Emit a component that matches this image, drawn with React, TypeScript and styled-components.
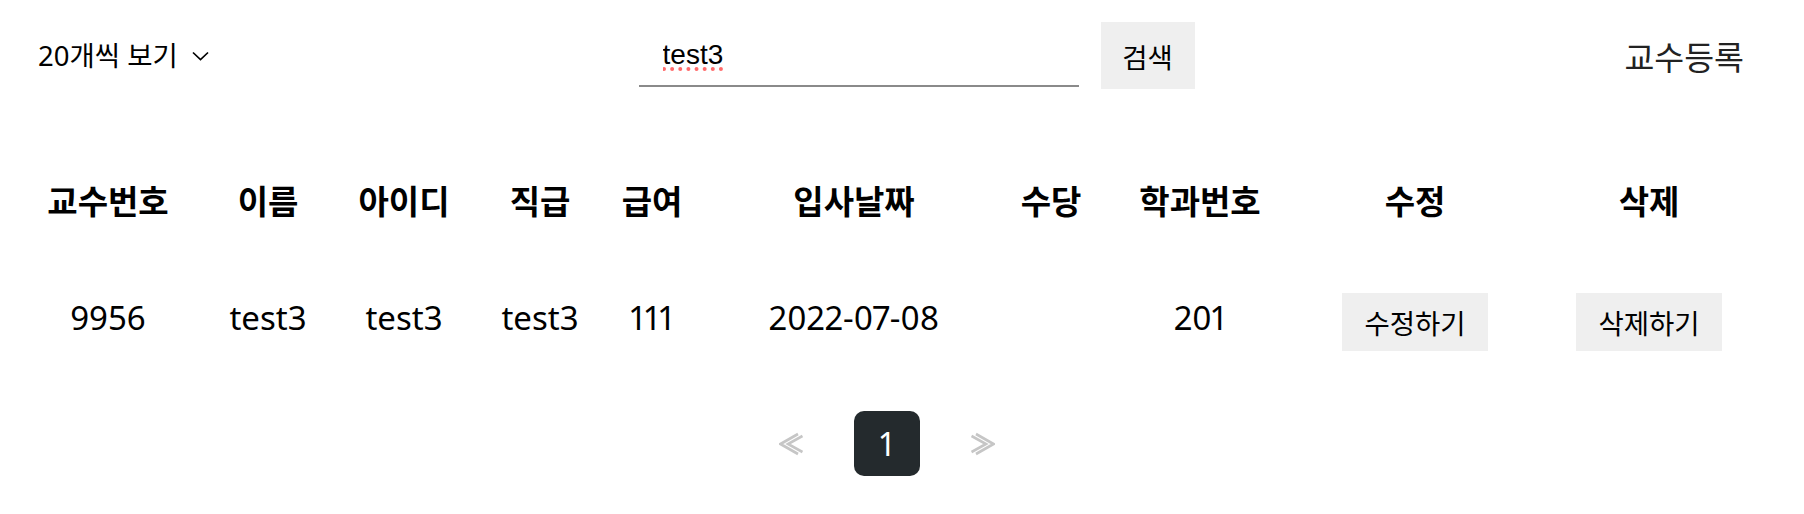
import React from 'react'
import styled, { createGlobalStyle } from 'styled-components'

const GlobalStyle = createGlobalStyle`
  html, body {
    margin: 0;
    padding: 0;
    background: #ffffff;
  }
  body {
    font-family: "Noto Sans", "Noto Sans CJK KR", sans-serif;
    color: #000;
  }
`

const Page = styled.div`
  width: 1804px;
`

const TopBar = styled.div`
  display: flex;
  justify-content: space-between;
  align-items: center;
  height: 67px;
  padding: 22px 60px 0 38px;
`

const PerPage = styled.div`
  display: flex;
  align-items: center;
  gap: 14px;
  font-size: 27.5px;
  line-height: 36px;
  cursor: pointer;
`

const SearchForm = styled.form`
  display: flex;
  align-items: center;
  gap: 22px;
  margin: 0;
`

const SearchInput = styled.input`
  width: 440px;
  height: 62px;
  box-sizing: border-box;
  padding: 0 0 0 24px;
  border: none;
  border-bottom: 2px solid #8a8a8a;
  outline: none;
  font-family: "Liberation Sans", Arial, sans-serif;
  font-size: 28px;
  color: #000;
  background: transparent;
  text-decoration: underline dotted #ff6b6b;
  text-decoration-thickness: 4px;
  text-underline-offset: 4px;
`

const GrayButton = styled.button<{ w: number; h: number }>`
  width: ${({ w }) => w}px;
  height: ${({ h }) => h}px;
  border: none;
  background: #efefef;
  padding: 0;
  font-family: "Noto Sans CJK KR", sans-serif;
  font-size: 27.5px;
  color: #000;
  cursor: pointer;
`

const RegisterLink = styled.a`
  font-family: "Noto Sans CJK KR", sans-serif;
  font-size: 32.5px;
  line-height: 42px;
  color: #222;
  text-decoration: none;
  cursor: pointer;
`

const Table = styled.table`
  table-layout: fixed;
  width: 1762px;
  margin: 61px 0 0 20px;
  border-collapse: collapse;
  text-align: center;
`

const HeadRow = styled.tr`
  height: 100px;
`

const BodyRow = styled.tr`
  height: 144px;
`

const Th = styled.th`
  padding: 0;
  font-family: "Noto Sans CJK KR", sans-serif;
  font-size: 33px;
  font-weight: 700;
  white-space: nowrap;
`

const Td = styled.td<{ $text?: boolean }>`
  padding: 0 0 ${({ $text }) => ($text ? '10px' : '0')};
  font-size: 33px;
  font-variant-numeric: proportional-nums;
  white-space: nowrap;
  vertical-align: middle;
`

const Pager = styled.ul`
  display: flex;
  justify-content: center;
  gap: 30px;
  list-style: none;
  margin: 17px 0 0;
  padding: 0 30px 0 0;
`

const PageItem = styled.li<{ active?: boolean }>`
  width: 66px;
  height: 65px;
  border-radius: 10px;
  display: flex;
  align-items: center;
  justify-content: center;
  background: ${({ active }) => (active ? '#242a2d' : 'transparent')};
  color: #fff;
  font-size: 32px;
  cursor: pointer;
`

const columns = [
  { title: '교수번호', width: 176 },
  { title: '이름', width: 144 },
  { title: '아이디', width: 128 },
  { title: '직급', width: 144 },
  { title: '급여', width: 80 },
  { title: '입사날짜', width: 324 },
  { title: '수당', width: 70 },
  { title: '학과번호', width: 228 },
  { title: '수정', width: 202 },
  { title: '삭제', width: 266 },
]

const professors = [
  { profno: 9956, name: 'test3', userid: 'test3', position: 'test3', pay: 111, hiredate: '2022-07-08', bonus: '', deptno: 201 },
]

function ChevronDown() {
  return (
    <svg width="17" height="10" viewBox="0 0 17 10" fill="none">
      <polyline points="1,1.5 8.5,8.5 16,1.5" stroke="#000" strokeWidth="1.7" />
    </svg>
  )
}

function DoubleArrow({ dir }: { dir: 'left' | 'right' }) {
  const flip = dir === 'right' ? 'scale(-1,1) translate(-24,0)' : undefined
  return (
    <svg width="24" height="24" viewBox="0 0 24 24" fill="none">
      <g transform={flip} stroke="#c6c6c6" strokeWidth="2.6">
        <polyline points="19,2 1.5,12 19,22" />
        <polyline points="23.5,4 9,12 23.5,20" />
      </g>
    </svg>
  )
}

export default function App() {
  return (
    <Page>
      <GlobalStyle />
      <TopBar>
        <PerPage>
          20개씩 보기
          <ChevronDown />
        </PerPage>
        <SearchForm onSubmit={(e) => e.preventDefault()}>
          <SearchInput defaultValue="test3" />
          <GrayButton w={94} h={67} type="submit">
            검색
          </GrayButton>
        </SearchForm>
        <RegisterLink>교수등록</RegisterLink>
      </TopBar>

      <Table>
        <colgroup>
          {columns.map((c) => (
            <col key={c.title} style={{ width: c.width }} />
          ))}
        </colgroup>
        <thead>
          <HeadRow>
            {columns.map((c) => (
              <Th key={c.title}>{c.title}</Th>
            ))}
          </HeadRow>
        </thead>
        <tbody>
          {professors.map((p) => (
            <BodyRow key={p.profno}>
              <Td $text>{p.profno}</Td>
              <Td $text>{p.name}</Td>
              <Td $text>{p.userid}</Td>
              <Td $text>{p.position}</Td>
              <Td $text>{p.pay}</Td>
              <Td $text>{p.hiredate}</Td>
              <Td $text>{p.bonus}</Td>
              <Td $text>{p.deptno}</Td>
              <Td>
                <GrayButton w={146} h={58}>수정하기</GrayButton>
              </Td>
              <Td>
                <GrayButton w={146} h={58}>삭제하기</GrayButton>
              </Td>
            </BodyRow>
          ))}
        </tbody>
      </Table>

      <Pager>
        <PageItem>
          <DoubleArrow dir="left" />
        </PageItem>
        <PageItem active>1</PageItem>
        <PageItem>
          <DoubleArrow dir="right" />
        </PageItem>
      </Pager>
    </Page>
  )
}
